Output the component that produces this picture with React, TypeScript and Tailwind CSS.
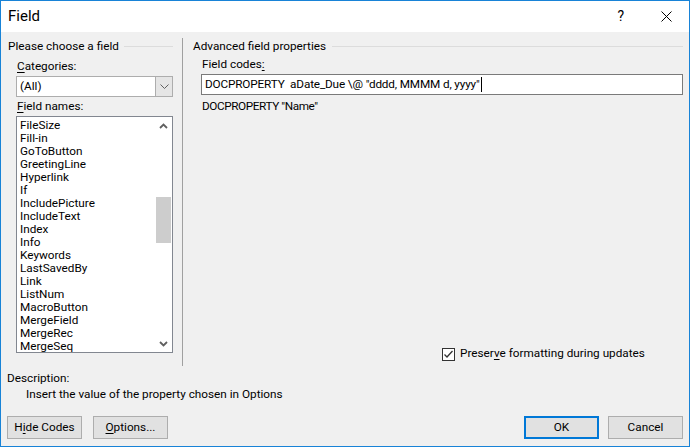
const fields = [
  'FileSize', 'Fill-in', 'GoToButton', 'GreetingLine', 'Hyperlink', 'If', 'IncludePicture', 'IncludeText',
  'Index', 'Info', 'Keywords', 'LastSavedBy', 'Link', 'ListNum', 'MacroButton', 'MergeField', 'MergeRec', 'MergeSeq',
];

function Chevron({ up = false, className = '' }: { up?: boolean; className?: string }) {
  return (
    <svg width="9" height="6" viewBox="0 0 9 6" className={className}>
      <path d={up ? 'M1 5 L4.5 1.5 L8 5' : 'M1 1 L4.5 4.5 L8 1'} fill="none" stroke="#606060" strokeWidth="1.8" />
    </svg>
  );
}

function GroupHeader({ title, lineClass }: { title: string; lineClass: string }) {
  return (
    <div className="flex h-[16px] items-center">
      <span className="leading-[16px]">{title}</span>
      <div className={`h-px flex-1 bg-[#dcdcdc] ${lineClass}`} />
    </div>
  );
}

function Btn({ children, primary = false, className = '' }: { children: React.ReactNode; primary?: boolean; className?: string }) {
  return (
    <div
      className={`flex h-[23px] w-[75px] items-center justify-center bg-[#e1e1e1] ${
        primary ? 'border-2 border-[#0078d7]' : 'border border-[#adadad]'
      } ${className}`}
    >
      {children}
    </div>
  );
}

export default function App() {
  return (
    <div
      className="flex h-[447px] w-[690px] flex-col border border-[#1883d7] bg-[#f0f0f0] text-[11.75px] text-black"
      style={{ fontFamily: 'Roboto, "Liberation Sans", Arial, sans-serif' }}
    >
      {/* title bar */}
      <div className="flex h-[31px] items-center bg-white pl-[7px]">
        <span className="text-[15px]">Field</span>
        <span className="ml-auto mr-[37px] text-[14px]">?</span>
        <svg width="11" height="11" viewBox="0 0 11 11" className="mr-[17px]">
          <path d="M0.5 0.5 L10.5 10.5 M10.5 0.5 L0.5 10.5" stroke="#000" strokeWidth="1" />
        </svg>
      </div>

      {/* main area */}
      <div className="mt-[6px] flex h-[328px]">
        {/* left column */}
        <div className="flex w-[181px] flex-col pl-[7px]">
          <GroupHeader title="Please choose a field" lineClass="ml-[5px] mr-[9px]" />
          <div className="ml-[9px] mt-[4px] h-[16px] leading-[16px]">
            <u className="underline-offset-2">C</u>ategories:
          </div>
          <div className="ml-[8px] mt-[2px] flex h-[21px] w-[157px] border border-[#adadad] bg-white">
            <div className="flex flex-1 items-center pl-[3px]">(All)</div>
            <div className="flex w-[17px] items-center justify-center border-l border-[#adadad] bg-[#e5e5e5]">
              <svg width="9" height="5" viewBox="0 0 9 5">
                <path d="M0.5 0.5 L4.5 4.5 L8.5 0.5" fill="none" stroke="#606060" strokeWidth="1" />
              </svg>
            </div>
          </div>
          <div className="ml-[9px] mt-[1px] h-[16px] leading-[16px]">
            <u className="underline-offset-2">F</u>ield names:
          </div>
          <div className="ml-[8px] mt-[2px] flex h-[237px] w-[157px] border border-[#828790] bg-white">
            <div className="flex-1 overflow-hidden pl-[3px] pt-[2px]">
              {fields.map((f) => (
                <div key={f} className="h-[13px] leading-[13px]">
                  {f}
                </div>
              ))}
            </div>
            <div className="flex w-[17px] flex-col items-center">
              <div className="flex h-[17px] items-center justify-center">
                <Chevron up />
              </div>
              <div className="mt-[63px] h-[46px] w-[15px] bg-[#cdcdcd]" />
              <div className="flex-1" />
              <div className="flex h-[17px] items-center justify-center">
                <Chevron />
              </div>
            </div>
          </div>
        </div>

        <div className="w-px bg-[#a0a0a0]" />

        {/* right column */}
        <div className="flex flex-1 flex-col pl-[10px]">
          <GroupHeader title="Advanced field properties" lineClass="ml-[6px] mr-[6px]" />
          <div className="ml-[9px] mt-[2px] h-[16px] leading-[16px]">
            Field codes<u className="underline-offset-2">:</u>
          </div>
          <div className="ml-[8px] mr-[6px] mt-[2px] flex h-[21px] items-center border border-[#7a7a7a] bg-white pl-[3px]">
            <span className="whitespace-pre tracking-[-0.15px]">DOCPROPERTY  aDate_Due \@ "dddd, MMMM d, yyyy"</span>
            <span className="ml-px h-[15px] w-px bg-black" />
          </div>
          <div className="ml-[9px] mt-[3px] h-[16px] leading-[16px] tracking-[-0.4px]">DOCPROPERTY "Name"</div>
          <div className="flex-1" />
          <div className="mb-[4px] ml-[249px] flex h-[16px] items-center">
            <div className="flex h-[13px] w-[13px] items-center justify-center border border-[#333] bg-white">
              <svg width="11" height="11" viewBox="0 0 11 11">
                <path d="M1.5 5.5 L4 8 L9.5 2" fill="none" stroke="#333" strokeWidth="1.3" />
              </svg>
            </div>
            <span className="ml-[5px]">
              Preser<u className="underline-offset-2">v</u>e formatting during updates
            </span>
          </div>
        </div>
      </div>

      {/* description */}
      <div className="ml-[6px] mt-[4px] h-[16px] leading-[16px]">Description:</div>
      <div className="ml-[25px] h-[16px] leading-[16px]">Insert the value of the property chosen in Options</div>

      {/* buttons */}
      <div className="mt-[14px] flex px-[6px]">
        <Btn>
          <span>
            H<u className="underline-offset-2">i</u>de Codes
          </span>
        </Btn>
        <Btn className="ml-[11px]">
          <span>
            <u className="underline-offset-2">O</u>ptions...
          </span>
        </Btn>
        <Btn primary className="ml-auto">
          OK
        </Btn>
        <Btn className="ml-[9px]">Cancel</Btn>
      </div>
    </div>
  );
}
